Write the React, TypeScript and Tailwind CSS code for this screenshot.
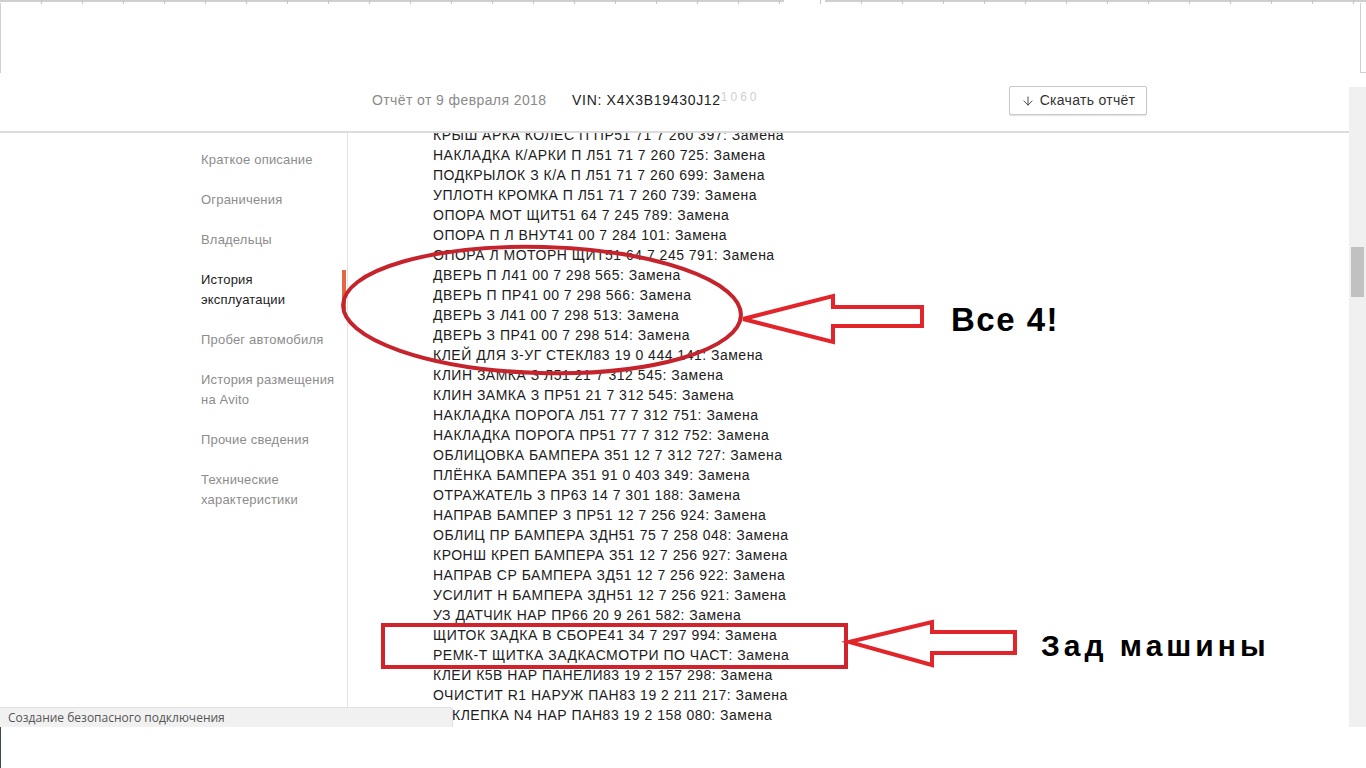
import React from 'react';
import { ArrowDown } from 'lucide-react';

const NAV = [
  { label: 'Краткое описание' },
  { label: 'Ограничения' },
  { label: 'Владельцы' },
  { label: 'История эксплуатации', active: true },
  { label: 'Пробег автомобиля' },
  { label: 'История размещения на Avito' },
  { label: 'Прочие сведения' },
  { label: 'Технические характеристики' },
];

const PARTS = [
  'КРЫШ АРКА КОЛЕС П ПР51 71 7 260 397',
  'НАКЛАДКА К/АРКИ П Л51 71 7 260 725',
  'ПОДКРЫЛОК З К/А П Л51 71 7 260 699',
  'УПЛОТН КРОМКА П Л51 71 7 260 739',
  'ОПОРА МОТ ЩИТ51 64 7 245 789',
  'ОПОРА П Л ВНУТ41 00 7 284 101',
  'ОПОРА Л МОТОРН ЩИТ51 64 7 245 791',
  'ДВЕРЬ П Л41 00 7 298 565',
  'ДВЕРЬ П ПР41 00 7 298 566',
  'ДВЕРЬ З Л41 00 7 298 513',
  'ДВЕРЬ З ПР41 00 7 298 514',
  'КЛЕЙ ДЛЯ 3-УГ СТЕКЛ83 19 0 444 141',
  'КЛИН ЗАМКА З Л51 21 7 312 545',
  'КЛИН ЗАМКА З ПР51 21 7 312 545',
  'НАКЛАДКА ПОРОГА Л51 77 7 312 751',
  'НАКЛАДКА ПОРОГА ПР51 77 7 312 752',
  'ОБЛИЦОВКА БАМПЕРА З51 12 7 312 727',
  'ПЛЁНКА БАМПЕРА З51 91 0 403 349',
  'ОТРАЖАТЕЛЬ З ПР63 14 7 301 188',
  'НАПРАВ БАМПЕР З ПР51 12 7 256 924',
  'ОБЛИЦ ПР БАМПЕРА ЗДН51 75 7 258 048',
  'КРОНШ КРЕП БАМПЕРА З51 12 7 256 927',
  'НАПРАВ СР БАМПЕРА ЗД51 12 7 256 922',
  'УСИЛИТ Н БАМПЕРА ЗДН51 12 7 256 921',
  'УЗ ДАТЧИК НАР ПР66 20 9 261 582',
  'ЩИТОК ЗАДКА В СБОРЕ41 34 7 297 994',
  'РЕМК-Т ЩИТКА ЗАДКАСМОТРИ ПО ЧАСТ',
  'КЛЕЙ К5В НАР ПАНЕЛИ83 19 2 157 298',
  'ОЧИСТИТ R1 НАРУЖ ПАН83 19 2 211 217',
  'КЛЕПКА N4 НАР ПАН83 19 2 158 080',
];

// faint column ticks along the top edge of the screenshot
const TICKS = Array.from({ length: 33 }, (_, i) => (i + 1) * 41);

export default function App() {
  return (
    <div className="relative w-[1366px] h-[768px] overflow-hidden bg-white font-['Liberation_Sans',Arial,sans-serif]">
      {/* top ruler */}
      <div className="relative h-[3px]">
        <div className="flex h-[2px]">
          <div className="w-[784px] bg-[#cfcfcf]" />
          <div className="w-[41px] bg-white" />
          <div className="flex-1 bg-[#cfcfcf]" />
        </div>
        {TICKS.map((x) => (
          <div key={x} className="absolute top-0 w-px h-[4px] bg-[#c4c4c4]" style={{ left: x }} />
        ))}
      </div>

      {/* blank band above the page */}
      <div className="h-[72px] flex">
        <div className="w-px h-[70px] bg-[#d0d0d0]" />
        <div className="flex-1" />
        <div className="w-[6px] border-l border-b border-[#cfcfcf] h-[70px]" />
      </div>

      {/* page */}
      <div className="flex h-[652px]">
        <div className="w-[1349px] flex flex-col overflow-hidden">
          <header className="h-[58px] shrink-0 flex items-start pt-[11px] pl-[372px] border-b-2 border-[#dcdcdc]">
            <span className="w-[200px] text-[14px] leading-[29px] tracking-[0.4px] text-[#8a8a8a]">Отчёт от 9 февраля 2018</span>
            <span className="flex-1 text-[14px] leading-[29px] tracking-[0.7px] text-[#222]">
              VIN: X4X3B19430J12
              <span className="text-[#cfcfcf] text-[12px] leading-[12px] tracking-[3px] align-[4px]">1060</span>
            </span>
            <button className="mr-[202px] w-[138px] h-[29px] flex items-center justify-center gap-[5px] border border-[#c9c9c9] rounded-[2px] shadow-[0_1px_1px_rgba(0,0,0,0.12)] text-[14px] tracking-[0.3px] text-[#333] bg-white">
              <ArrowDown className="w-[14px] h-[14px]" strokeWidth={1.5} />
              Скачать отчёт
            </button>
          </header>

          <div className="flex flex-1 min-h-0">
            <nav className="w-[348px] shrink-0 border-r border-[#e3e3e3] pt-[17px] flex flex-col gap-[20px]">
              {NAV.map((item) => (
                <div key={item.label} className="flex items-stretch">
                  <span
                    className={`ml-[201px] w-[136px] text-[13px] leading-[20px] tracking-[0.2px] ${
                      item.active ? 'text-[#222]' : 'text-[#8c8c8c]'
                    }`}
                  >
                    {item.label}
                  </span>
                  {item.active && <div className="ml-auto mr-px w-[4px] bg-[#e4683f]" />}
                </div>
              ))}
            </nav>

            <div className="flex-1 overflow-hidden">
              <ul className="-mt-[8px] pl-[85px] text-[14px] leading-[20px] tracking-[0.5px] text-[#1c1c1c]">
                {PARTS.map((p, i) => (
                  <li key={i} className={i === PARTS.length - 1 ? 'pl-[19px]' : ''}>
                    {p}: Замена
                  </li>
                ))}
              </ul>
            </div>
          </div>
        </div>

        {/* scrollbar */}
        <div className="w-[17px] flex flex-col">
          <div className="h-[12px] bg-white" />
          <div className="flex-1 bg-[#f0f0f0] pt-[160px] px-[2px]">
            <div className="h-[50px] bg-[#c1c1c1]" />
          </div>
        </div>
      </div>

      {/* bottom margin */}
      <div className="h-[41px] flex">
        <div className="w-px bg-[#3b4a44]" />
      </div>

      {/* browser status bubble */}
      <div className="absolute left-0 top-[707px] w-[453px] h-[20px] bg-[#f1f1f1] border-t border-r border-[#e0e0e0] rounded-tr-[3px] pl-[8px] text-[12px] leading-[19px] text-[#555] font-['Open_Sans',sans-serif]">
        Создание безопасного подключения
      </div>

      {/* hand-drawn annotations */}
      <svg className="absolute inset-0 pointer-events-none" width="1366" height="768">
        <ellipse cx="542" cy="310" rx="199" ry="63" fill="none" stroke="#c5242d" strokeWidth="4" transform="rotate(1.5 542 310)" />
        <polygon
          points="743,319 833,296 833,307 922,307 922,326 833,326 833,342"
          fill="none"
          stroke="#e1252b"
          strokeWidth="4"
          strokeLinejoin="miter"
        />
        <rect x="383" y="625" width="463" height="42" fill="none" stroke="#d0232c" strokeWidth="4" />
        <polygon
          points="849,642 932,622 932,632 1015,632 1015,653 932,653 932,665"
          fill="none"
          stroke="#e1252b"
          strokeWidth="4"
          strokeLinejoin="miter"
        />
      </svg>
      <div className="absolute left-[951px] top-[300px] text-[33px] leading-[40px] font-bold text-black tracking-[1.5px]">
        Все 4!
      </div>
      <div className="absolute left-[1041px] top-[628px] text-[30px] leading-[36px] font-bold text-black tracking-[4px]">
        Зад машины
      </div>
    </div>
  );
}
